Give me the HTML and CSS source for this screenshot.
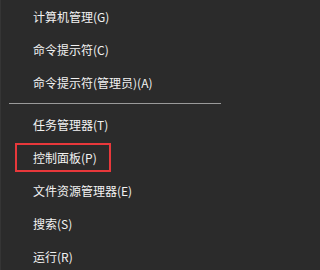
FILE: index.html
```html
<!DOCTYPE html>
<html lang="zh-CN">
<head>
<meta charset="utf-8">
<link rel="stylesheet" href="styles.css">
</head>
<body>
<div class="menu">
  <div class="item">计算机管理(G)</div>
  <div class="item">命令提示符(C)</div>
  <div class="item">命令提示符(管理员)(A)</div>
  <div class="sep"><div class="line"></div></div>
  <div class="item">任务管理器(T)</div>
  <div class="item marked">控制面板(P)<span class="mark"></span></div>
  <div class="item">文件资源管理器(E)</div>
  <div class="item">搜索(S)</div>
  <div class="item">运行(R)</div>
</div>
</body>
</html>
```
FILE: styles.css
```css
html, body {
  margin: 0;
  padding: 0;
  background: #2b2b2b;
}
.menu {
  width: 229px;
  height: 270px;
  overflow: hidden;
  background: #2b2b2b;
  border-left: 1px solid #353535;
  box-sizing: border-box;
  font-family: "Microsoft YaHei", "Noto Sans CJK SC", "Noto Sans", sans-serif;
  font-size: 12px;
  color: #f2f2f2;
}
.item {
  height: 33px;
  line-height: 33px;
  padding-left: 32px;
  white-space: nowrap;
  position: relative;
}
.sep {
  height: 9px;
  display: flex;
  align-items: center;
  padding: 0 8px 0 8px;
}
.line {
  flex: 1;
  height: 1px;
  background: #9a9a9a;
}
.mark {
  position: absolute;
  left: 14px;
  top: 2px;
  width: 96px;
  height: 29px;
  border: 2px solid #e8383b;
  box-sizing: border-box;
}
```
